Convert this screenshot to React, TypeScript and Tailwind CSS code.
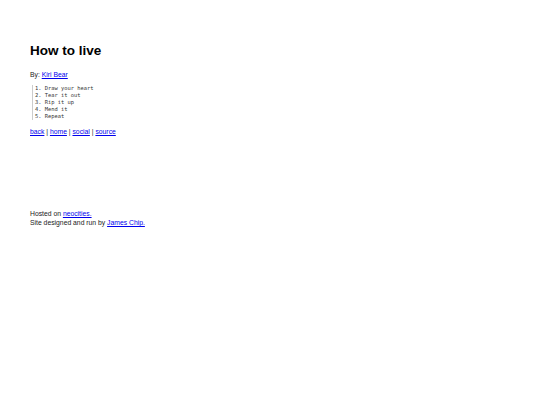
export default function App() {
  const items = ["Draw your heart", "Tear it out", "Rip it up", "Mend it", "Repeat"];
  return (
    <div className="min-h-[405px] w-[540px] bg-white text-[#222] font-['Liberation_Sans',Arial,sans-serif] text-[6.8px] leading-[8px] pl-[30px] pt-[43px]">
      <h1 className="text-[13.5px] leading-[16px] font-bold text-black">How to live</h1>
      <p className="mt-[12px]">
        By: <a href="#" className="text-[#0000ee] underline">Kiri Bear</a>
      </p>
      <div className="mt-[6px] ml-[2px] border-l border-[#ccc] pl-[2px] font-['DejaVu_Sans_Mono',monospace] text-[5.4px] leading-[7px] text-[#333]">
        {items.map((t, i) => (
          <div key={i}>{i + 1}. {t}</div>
        ))}
      </div>
      <p className="mt-[8px]">
        <a href="#" className="text-[#0000ee] underline">back</a> |{" "}
        <a href="#" className="text-[#0000ee] underline">home</a> |{" "}
        <a href="#" className="text-[#0000ee] underline">social</a> |{" "}
        <a href="#" className="text-[#0000ee] underline">source</a>
      </p>
      <div className="mt-[73px] leading-[9px]">
        <p>
          Hosted on <a href="#" className="text-[#0000ee] underline">neocities.</a>
        </p>
        <p>
          Site designed and run by <a href="#" className="text-[#0000ee] underline">James Chip.</a>
        </p>
      </div>
    </div>
  );
}
